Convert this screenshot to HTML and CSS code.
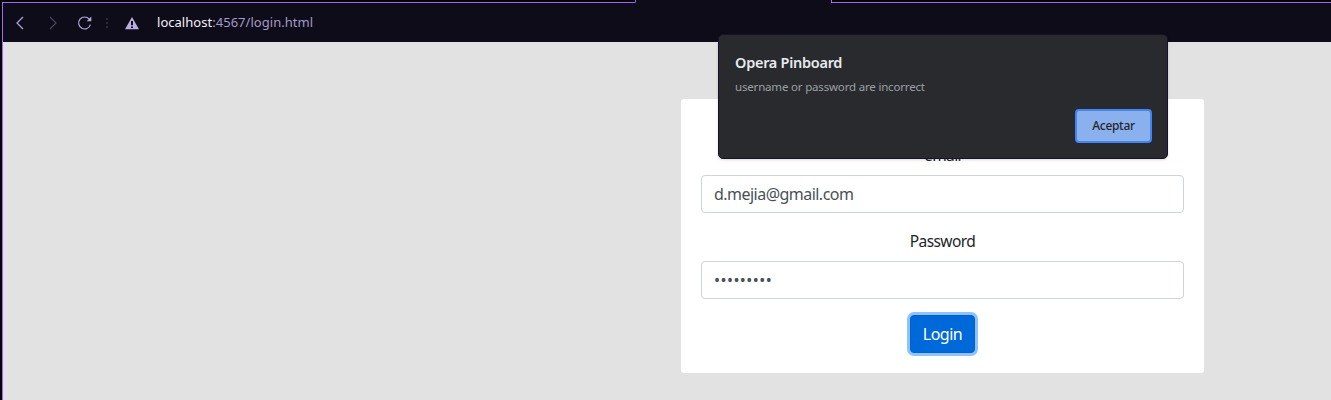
FILE: index.html
```html
<!DOCTYPE html>
<html lang="es">
<head>
<meta charset="utf-8">
<title>Login</title>
<link rel="stylesheet" href="styles.css">
</head>
<body>
<div class="browser">
  <div class="tabstrip"><span class="tabs-left"></span><span class="tab-active"></span><span class="tabs-right"></span></div>
  <div class="window">
    <header class="toolbar">
      <svg class="icon back" width="10" height="16" viewBox="0 0 10 16"><path d="M8 2 2 8 8 14"/></svg>
      <svg class="icon forward" width="10" height="16" viewBox="0 0 10 16"><path d="M2 2 8 8 2 14"/></svg>
      <svg class="icon reload" width="16" height="16" viewBox="0 0 16 16"><path d="M12.300 4.200A6 6 0 1 0 13.400 9.700"/><path class="solid" d="M14.300 1.500v4.700H9.700z"/></svg>
      <svg class="dots" width="2" height="10" viewBox="0 0 2 10"><path d="M0 0h2v2H0zM0 4h2v2H0zM0 8h2v2H0z"/></svg>
      <svg class="warning" width="14" height="13" viewBox="0 0 14 13"><path fill-rule="evenodd" d="M7 0 14 12.300H0zM6 4v4.200h2V4zM6 9.400v1.700h2V9.400z"/></svg>
      <span class="url"><b>localhost</b>:4567/login.html</span>
    </header>
    <main class="page">
      <form class="card">
        <label class="label">email</label>
        <div class="field email">d.mejia@gmail.com</div>
        <label class="label">Password</label>
        <div class="field password">•••••••••</div>
        <button class="login" type="button"><span>Login</span></button>
      </form>
    </main>
  </div>
</div>
<section class="dialog">
  <h1>Opera Pinboard</h1>
  <p>username or password are incorrect</p>
  <button type="button">Aceptar</button>
</section>
</body>
</html>
```
FILE: styles.css
```css
* { box-sizing: border-box; }
body { margin: 0; height: 400px; overflow: hidden; background: #020105; font-family: "Segoe UI", "Noto Sans", sans-serif; }
.browser { display: flex; flex-direction: column; height: 400px; padding-left: 2px; }
.tabstrip { display: flex; height: 3px; }
.tabs-left { width: 634px; border-bottom: 1px solid #a366ff; border-right: 1px solid #a366ff; border-bottom-right-radius: 2px; }
.tab-active { width: 195px; background: #0f0c1a; }
.tabs-right { flex: 1; border-bottom: 1px solid #a366ff; border-left: 1px solid #a366ff; }
.window { flex: 1; display: flex; flex-direction: column; border-left: 1px solid #a366ff; }
.toolbar { display: flex; align-items: center; height: 39px; background: #0f0c1a; padding-left: 12px; }
.icon { fill: none; stroke: #b3a8dc; stroke-width: 1.2; flex: none; }
.forward { stroke: #49435f; margin-left: 23px; }
.reload { margin-left: 19px; }
.icon .solid { fill: #b3a8dc; stroke: none; }
.dots { fill: #2d283c; margin-left: 13px; }
.warning { fill: #b9aee2; margin-left: 17px; margin-top: 1px; }
.url { margin: -2px 0 0 18px; color: #a39ac6; font-size: 13px; letter-spacing: 0.03px; white-space: nowrap; }
.url b { color: #f3f1f8; font-weight: 400; }
.page { flex: 1; background: #e2e2e2; padding: 57px 127px 0 678px; }
.card { height: 274px; padding: 44px 20px 20px; display: flex; flex-direction: column; align-items: center; background: #fff; border-radius: 3px; }
.label { height: 24px; line-height: 24px; margin-bottom: 8px; font-size: 15.5px; letter-spacing: -0.6px; color: #212529; }
.field { width: 100%; height: 38px; margin-bottom: 16px; padding: 0 12px; border: 1px solid #ced4da; border-radius: 4px; line-height: 36px; font-size: 16px; color: #495057; }
.email { letter-spacing: -0.53px; }
.password { letter-spacing: 0.45px; }
.login { width: 65px; height: 38px; padding: 0; border: 1px solid #0062cc; border-radius: 4px; background: #0069d9; box-shadow: 0 0 0 3px #8fc3ff; color: #fff; font: 16px "Segoe UI", "Noto Sans", sans-serif; letter-spacing: -0.5px; }
.dialog { position: absolute; left: 718px; top: 34px; width: 450px; height: 125px; padding: 17px 15px 15px 16px; display: flex; flex-direction: column; background: #292a2d; border: 1px solid #17122a; border-radius: 5px; box-shadow: 0 1px 3px rgba(0,0,0,.15); }
.dialog h1 { margin: 0; font-size: 14.5px; letter-spacing: -0.28px; line-height: 20px; font-weight: 600; color: #e8eaed; }
.dialog p { margin: 7px 0 0; font-size: 11.5px; letter-spacing: -0.18px; line-height: 16px; color: #9aa0a6; }
.dialog button { align-self: flex-end; width: 77px; height: 34px; margin-top: 14px; padding: 0 0 1px; border: 2px solid #4384f2; border-radius: 4px; background: #8ab0ee; color: #25262a; font: 500 12px "Segoe UI", "Noto Sans", sans-serif; letter-spacing: -0.3px; }
```
